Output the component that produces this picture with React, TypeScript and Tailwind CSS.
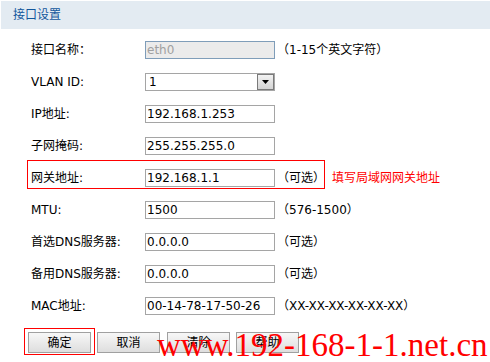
import React from "react";

const font = { fontFamily: '"DejaVu Sans", "Noto Sans CJK SC", sans-serif' };

function TextInput({ value, disabled }: { value: string; disabled?: boolean }) {
  return (
    <div
      className={
        "w-[130px] h-[18px] flex items-center pl-[1px] text-[12px] leading-none border " +
        (disabled
          ? "border-[#7f9db9] bg-[#ebebeb] text-[#a0a0a0]"
          : "border-[#a5a5a5] bg-white text-black")
      }
    >
      {value}
    </div>
  );
}

function Row({
  label,
  children,
  hint,
  extra,
}: {
  label: string;
  children: React.ReactNode;
  hint?: string;
  extra?: React.ReactNode;
}) {
  return (
    <div className="relative h-[32px] flex items-center">
      <div className="w-[145px] pl-[31px] text-[12px] text-black whitespace-nowrap">{label}</div>
      {children}
      {hint && <div className="ml-[2px] text-[12px] text-black whitespace-nowrap">{hint}</div>}
      {extra}
    </div>
  );
}

function Btn({ label }: { label: string }) {
  return (
    <div className="w-[63px] h-[21px] flex items-center justify-center text-[12px] text-black border border-[#a0a0a0] bg-gradient-to-b from-[#f7f7f7] to-[#dedede]">
      {label}
    </div>
  );
}

export default function App() {
  return (
    <div className="relative w-[490px] h-[362px] overflow-hidden bg-white" style={font}>
      <div className="ml-[1px] mt-[1px] h-[28px] bg-[#e3ebf2] flex items-center pl-[12px] text-[12px] text-[#12579c]">
        接口设置
      </div>
      <div className="mt-[5px]">
        <Row label="接口名称：" hint="（1-15个英文字符）">
          <TextInput value="eth0" disabled />
        </Row>
        <Row label="VLAN ID:">
          <div className="w-[130px] h-[18px] flex items-center border border-[#a5a5a5] bg-white text-[12px] leading-none">
            <span className="flex-1 pl-[3px]">1</span>
            <div className="w-[17px] h-[16px] border border-[#7a7a7a] bg-gradient-to-b from-[#f2f2f2] to-[#d4d4d4] flex items-center justify-center">
              <svg width="7" height="4" viewBox="0 0 7 4">
                <path d="M0 0h7L3.5 4z" fill="#000" />
              </svg>
            </div>
          </div>
        </Row>
        <Row label="IP地址:">
          <TextInput value="192.168.1.253" />
        </Row>
        <Row label="子网掩码:">
          <TextInput value="255.255.255.0" />
        </Row>
        <Row
          label="网关地址:"
          hint="（可选）"
          extra={
            <>
              <div className="absolute left-[27px] top-[-2px] w-[298px] h-[29px] border border-[#ff0000]" />
              <div className="ml-[7px] text-[12px] text-[#ff0000] whitespace-nowrap">填写局域网网关地址</div>
            </>
          }
        >
          <TextInput value="192.168.1.1" />
        </Row>
        <Row label="MTU:" hint="（576-1500）">
          <TextInput value="1500" />
        </Row>
        <Row label="首选DNS服务器:" hint="（可选）">
          <TextInput value="0.0.0.0" />
        </Row>
        <Row label="备用DNS服务器:" hint="（可选）">
          <TextInput value="0.0.0.0" />
        </Row>
        <Row label="MAC地址:" hint="（XX-XX-XX-XX-XX-XX）">
          <TextInput value="00-14-78-17-50-26" />
        </Row>
      </div>
      <div className="relative mt-[10px] pl-[28px] flex gap-[6px]">
        <div className="absolute left-[24px] top-[-4px] w-[71px] h-[27px] border border-[#ff0000]" />
        <Btn label="确定" />
        <Btn label="取消" />
        <div className="ml-[1px]">
          <Btn label="清除" />
        </div>
        <Btn label="帮助" />
      </div>
      <div
        className="absolute left-[157px] top-[329px] text-[33px] leading-none text-[#ff0000] whitespace-nowrap"
        style={{ fontFamily: '"Liberation Serif", serif' }}
      >
        www.192-168-1-1.net.cn
      </div>
    </div>
  );
}
